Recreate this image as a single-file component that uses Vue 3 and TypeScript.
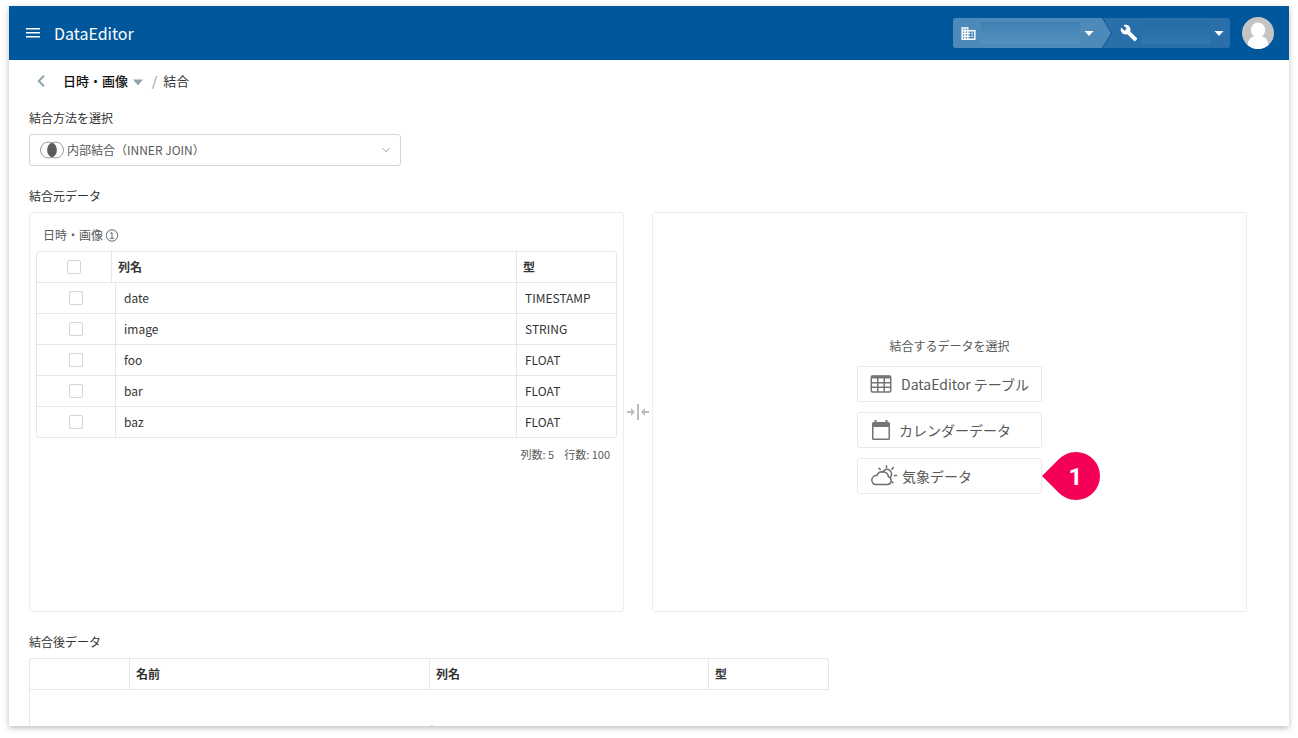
<script setup lang="ts">
import { ref } from 'vue'

interface Column {
  name: string
  type: string
  checked: boolean
}

const joinMethod = ref('inner')
const allChecked = ref(false)
const columns = ref<Column[]>([
  { name: 'date', type: 'TIMESTAMP', checked: false },
  { name: 'image', type: 'STRING', checked: false },
  { name: 'foo', type: 'FLOAT', checked: false },
  { name: 'bar', type: 'FLOAT', checked: false },
  { name: 'baz', type: 'FLOAT', checked: false },
])

function toggleAll(): void {
  columns.value.forEach((c) => (c.checked = allChecked.value))
}
</script>

<template>
  <div class="window">
    <header class="topbar">
      <button class="plain" type="button" aria-label="メニュー">
        <svg width="14" height="12" viewBox="0 0 14 12"><path d="M0 1.75h14M0 5.75h14M0 9.75h14" stroke="#fff" stroke-width="1.5" /></svg>
      </button>
      <h1 class="brand">DataEditor</h1>
      <nav class="switcher">
        <button class="segment org" type="button" aria-label="組織">
          <svg width="17" height="17" viewBox="0 0 24 24" fill="#fff"><path d="M12 7V3H2v18h20V7H12zM6 19H4v-2h2v2zm0-4H4v-2h2v2zm0-4H4V9h2v2zm0-4H4V5h2v2zm4 12H8v-2h2v2zm0-4H8v-2h2v2zm0-4H8V9h2v2zm0-4H8V5h2v2zm10 12h-8v-2h2v-2h-2v-2h2v-2h-2V9h8v10zm-2-8h-2v2h2v-2zm0 4h-2v2h2v-2z" /></svg>
          <span class="masked"></span>
          <svg width="10" height="5" viewBox="0 0 10 5"><path d="M.5 0h9L5 5z" fill="#fff" /></svg>
        </button>
        <button class="segment project" type="button" aria-label="プロジェクト">
          <svg width="18" height="18" viewBox="0 0 24 24" fill="#fff"><path d="M22.7 19l-9.1-9.1c.9-2.3.4-5-1.5-6.9-2-2-5-2.4-7.4-1.3L9 6 6 9 1.6 4.7C.4 7.1.9 10.1 2.9 12.1c1.9 1.9 4.6 2.4 6.9 1.5l9.1 9.1c.4.4 1 .4 1.4 0l2.3-2.3c.5-.4.5-1.1.1-1.4z" /></svg>
          <span class="masked"></span>
          <svg width="10" height="5" viewBox="0 0 10 5"><path d="M.5 0h9L5 5z" fill="#fff" /></svg>
        </button>
      </nav>
      <button class="plain avatar" type="button" aria-label="アカウント">
        <svg width="32" height="32" viewBox="0 0 32 32">
          <circle cx="16" cy="16" r="16" fill="#c4c4c4" />
          <ellipse cx="16" cy="13" rx="7.2" ry="7.5" fill="#fff" />
          <path d="M5.6 28.2C6 22.500 9 20 13 19h6c4 1 7 3.500 7.400 9.200A16 16 0 0 1 5.600 28.200z" fill="#fff" />
        </svg>
      </button>
    </header>

    <main class="content">
      <nav class="breadcrumb">
        <a class="back" href="#" aria-label="戻る">
          <svg width="8" height="12" viewBox="0 0 8 12"><path d="M7 .8 1.800 6 7 11.200" fill="none" stroke="#90a4ae" stroke-width="2" /></svg>
        </a>
        <button class="plain current" type="button">
          日時・画像
          <svg width="10" height="10" viewBox="0 0 10 10"><path d="M0 3.500h10L5 9.500z" fill="#90a4ae" /></svg>
        </button>
        <span class="slash">/</span>
        <span>結合</span>
      </nav>

      <label class="heading" for="join-method">結合方法を選択</label>
      <div class="select">
        <svg class="select-icon" width="24" height="18" viewBox="0 0 24 18">
          <circle cx="8.500" cy="9" r="8" fill="none" stroke="#999" />
          <circle cx="15.500" cy="9" r="8" fill="none" stroke="#999" />
          <ellipse cx="12" cy="9" rx="4.600" ry="7" fill="#5c5c5c" />
        </svg>
        <select id="join-method" v-model="joinMethod">
          <option value="inner">内部結合（INNER JOIN）</option>
        </select>
        <svg class="select-caret" width="8" height="6" viewBox="0 0 8 6"><path d="M.5 1 4 4.800 7.500 1" fill="none" stroke="#a6a6a6" /></svg>
      </div>

      <h2 class="heading spaced">結合元データ</h2>
      <div class="panels">
        <section class="panel source">
          <div class="panel-title">
            日時・画像
            <svg width="14" height="14" viewBox="0 0 14 14" fill="none" stroke="#666"><circle cx="7" cy="7.500" r="5.700" /><path d="M5.300 5.300 7 4.500v6M5 10.300h4" /></svg>
          </div>
          <table class="grid columns">
            <thead>
              <tr>
                <th class="check"><input v-model="allChecked" type="checkbox" aria-label="すべて選択" @change="toggleAll" /></th>
                <th>列名</th>
                <th>型</th>
              </tr>
            </thead>
            <tbody>
              <tr v-for="c in columns" :key="c.name">
                <td class="check"><input v-model="c.checked" type="checkbox" :aria-label="c.name" /></td>
                <td>{{ c.name }}</td>
                <td>{{ c.type }}</td>
              </tr>
            </tbody>
          </table>
          <p class="counts"><span>列数: 5</span><span>行数: 100</span></p>
        </section>

        <svg class="merge" width="22" height="16" viewBox="0 0 22 16" fill="none" stroke="#bdbdbd" stroke-width="2">
          <path d="M11 0v16M0 8h5M22 8h-5" />
          <path d="M4 4v8l4-4zM18 4v8l-4-4z" fill="#bdbdbd" stroke="none" />
        </svg>

        <section class="panel target">
          <p class="prompt">結合するデータを選択</p>
          <div class="choices">
            <button class="choice table-choice" type="button">
              <svg width="22" height="18" viewBox="0 0 22 18" fill="none" stroke="#757575" stroke-width="1.500">
                <rect x="1.250" y="1" width="19.500" height="16" rx="1.500" />
                <path d="M1 2.100h20" stroke-width="2.800" />
                <path d="M1 7.800h20M1 12.300h20M7.750 2v15M14.250 2v15" />
              </svg>
              DataEditor テーブル
            </button>
            <button class="choice calendar-choice" type="button">
              <svg width="20" height="20" viewBox="0 0 20 20">
                <path d="M3.500 0h2v2h9V0h2v2h1A1.500 1.500 0 0 1 19 3.500v15a1.500 1.500 0 0 1-1.500 1.500h-15A1.500 1.500 0 0 1 1 18.500v-15A1.500 1.500 0 0 1 2.500 2h1zM2.500 7v11.500h15V7z" fill="#757575" />
              </svg>
              カレンダーデータ
            </button>
            <button class="choice weather-choice" type="button">
              <svg width="28" height="22" viewBox="0 0 28 22" fill="none" stroke="#6e6e6e" stroke-width="1.500" stroke-linecap="round" stroke-linejoin="round">
                <path d="M5.500 19.500h12a3.900 3.900 0 0 0 1-7.600 6.100 6.100 0 0 0-11.700-1.300A4.500 4.500 0 0 0 5.500 19.500z" />
                <path d="M12.600 7.200A4.700 4.700 0 1 1 20.400 12.200" />
                <path d="M16.500 .8v2M9 3.400l1.200 1M23.300 2.500l-1.400 1.700M24.500 10.500h2M22.300 17l.6.700" />
              </svg>
              気象データ
              <span class="marker">
                <svg width="58" height="48" viewBox="0 0 58 48"><path d="M0 24 15.500 8.500C21 3 26.500 0 34 0a24 24 0 0 1 0 48c-7.500 0-13-3-18.500-8.500z" fill="#f50057" /></svg>
                <b>1</b>
              </span>
            </button>
          </div>
        </section>
      </div>

      <h2 class="heading spaced">結合後データ</h2>
      <div class="result">
        <table class="grid joined">
          <thead>
            <tr>
              <th></th>
              <th>名前</th>
              <th>列名</th>
              <th>型</th>
            </tr>
          </thead>
        </table>
        <div class="empty">
          <svg width="64" height="40" viewBox="0 0 64 40" fill="none" stroke="#bdbdbd"><path d="M8 16 34 .5 56 16v18H8z" /></svg>
        </div>
      </div>
    </main>
  </div>
</template>

<style>
body {
  background: #fff;
}
</style>

<style scoped>
* {
  box-sizing: border-box;
}
.window {
  height: calc(100vh - 18px);
  margin: 6px 9px 12px;
  overflow: hidden;
  background: #fff;
  box-shadow: 0 2px 6px rgba(0, 0, 0, 0.26);
  color: #333;
  font: 12px/20px "Noto Sans CJK JP", sans-serif;
}
button,
select {
  font: inherit;
  color: inherit;
}
svg {
  display: block;
  flex: none;
}
h1,
h2,
p {
  margin: 0;
}
.plain {
  display: flex;
  align-items: center;
  padding: 0;
  border: 0;
  background: none;
}
.topbar {
  display: flex;
  align-items: center;
  height: 54px;
  padding: 0 15px 0 17px;
  background: #01579b;
  color: #fff;
}
.brand {
  margin-left: 14px;
  font-size: 16px;
  font-weight: 400;
  line-height: 24px;
}
.switcher {
  display: flex;
  margin-left: auto;
}
.segment {
  display: flex;
  align-items: center;
  height: 30px;
  border: 0;
}
.org {
  width: 158px;
  padding: 0 17px 0 7px;
  gap: 4px;
  border-radius: 3px 0 0 3px;
  background: #4d89b9;
  clip-path: polygon(0 0, 149px 0, 100% 50%, 149px 100%, 0 100%);
}
.project {
  width: 127px;
  margin-left: -8px;
  padding: 0 6px 0 17px;
  gap: 4px;
  border-radius: 0 3px 3px 0;
  background: #2970aa;
  clip-path: polygon(0 0, 100% 0, 100% 100%, 0 100%, 9px 50%);
}
.masked {
  flex: 1;
  height: 22px;
  background: linear-gradient(#3f80b3, #5590bd);
}
.project .masked {
  background: linear-gradient(#226ca7, #3377ae);
}
.avatar {
  margin-left: 12px;
}
.content {
  padding: 0 42px 0 20px;
}
.breadcrumb {
  display: flex;
  align-items: center;
  height: 42px;
  padding-left: 8px;
  font-size: 13px;
}
.current {
  gap: 5px;
  margin-left: 18px;
  color: #111;
  font-weight: 500;
}
.slash {
  margin: 0 6px 0 9px;
  color: #78909c;
}
.heading {
  display: block;
  font-size: 12px;
  font-weight: 400;
  line-height: 32px;
}
.spaced {
  margin-top: 14px;
}
.select {
  position: relative;
  width: 372px;
  height: 32px;
}
.select select {
  width: 100%;
  height: 100%;
  padding: 0 32px 0 37px;
  border: 1px solid #d4d4d4;
  border-radius: 3px;
  background: #fff;
  color: #595959;
  appearance: none;
}
.select-icon {
  position: absolute;
  top: 7px;
  left: 11px;
}
.select-caret {
  position: absolute;
  top: 13px;
  right: 11px;
}
.panels {
  display: grid;
  grid-template-columns: 1fr 28px 1fr;
  align-items: center;
}
.panel {
  height: 400px;
  border: 1px solid #ececec;
  border-radius: 3px;
}
.source {
  padding: 6px;
}
.panel-title {
  display: flex;
  align-items: center;
  gap: 2px;
  height: 32px;
  padding-left: 7px;
  color: #595959;
}
.grid {
  display: block;
  border: 1px solid #e6e6e6;
  border-radius: 3px;
}
.grid thead,
.grid tbody {
  display: block;
}
.grid tr {
  display: grid;
  height: 31px;
  border-bottom: 1px solid #e6e6e6;
}
.grid tbody tr:last-child {
  height: 30px;
  border-bottom: 0;
}
.columns thead tr {
  grid-template-columns: 75px 1fr 99px;
}
.columns tbody tr {
  grid-template-columns: 79px 1fr 99px;
}
.grid th,
.grid td {
  display: flex;
  align-items: center;
  padding: 0 8px;
  border-right: 1px solid #e6e6e6;
}
.grid th {
  padding: 0 6px;
  font-weight: 700;
}
.grid td {
  font-weight: 400;
}
.grid th:last-child,
.grid td:last-child {
  border-right: 0;
}
.grid .check {
  justify-content: center;
}
.check input {
  width: 14px;
  height: 14px;
  margin: 0;
  border: 1px solid #d4d4d4;
  border-radius: 2px;
  background: #fff;
  appearance: none;
}
.check input:checked {
  background: #01579b;
}
.counts {
  display: flex;
  justify-content: flex-end;
  gap: 10px;
  padding-right: 7px;
  color: #595959;
  font-size: 11px;
  line-height: 32px;
}
.merge {
  justify-self: center;
}
.target {
  display: flex;
  flex-direction: column;
  align-items: center;
  justify-content: center;
  gap: 4px;
}
.prompt {
  color: #595959;
  line-height: 32px;
}
.choices {
  display: flex;
  flex-direction: column;
  gap: 10px;
  width: 185px;
}
.choice {
  position: relative;
  display: flex;
  align-items: center;
  height: 36px;
  padding: 0 0 0 12px;
  border: 1px solid #e9e9e9;
  border-radius: 3px;
  background: #fff;
  color: #595959;
  font-size: 14px;
  white-space: nowrap;
}
.table-choice {
  gap: 9px;
}
.calendar-choice {
  gap: 8px;
  padding-left: 13px;
}
.weather-choice {
  gap: 4px;
}
.marker {
  position: absolute;
  top: -7px;
  left: 184px;
}
.marker b {
  position: absolute;
  inset: 0 0 0 9px;
  color: #fff;
  font: 700 24px/50px Roboto, sans-serif;
  text-align: center;
}
.result {
  width: 800px;
}
.joined {
  border-bottom: 0;
  border-radius: 3px 3px 0 0;
}
.joined tr {
  grid-template-columns: 100px 300px 279px 1fr;
}
.empty {
  display: flex;
  justify-content: center;
  padding: 35px 0 40px;
  border-left: 1px solid #e6e6e6;
}
</style>
